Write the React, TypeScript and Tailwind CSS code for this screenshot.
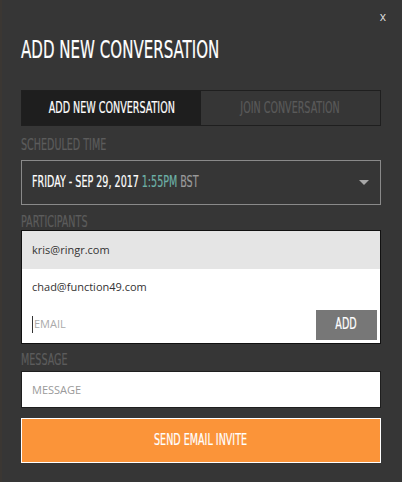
import { useState } from 'react'

const cond = "font-['DejaVu_Sans',sans-serif] [font-stretch:condensed] [-webkit-text-stroke:0.2px_currentColor]"
const body = "font-['Open_Sans',sans-serif]"

// squeeze DejaVu Condensed down to the tall narrow look of the original heading face
function Narrow({ children, className = '', center = false }: { children: React.ReactNode; className?: string; center?: boolean }) {
  return (
    <span className={`inline-block whitespace-nowrap scale-x-[0.71] ${center ? 'origin-center' : 'origin-left'} ${className}`}>
      {children}
    </span>
  )
}

function Label({ children }: { children: string }) {
  return (
    <div className={`${cond} text-[15px] leading-[14px] text-[#5c5c5c] uppercase`}>
      <Narrow>{children}</Narrow>
    </div>
  )
}

export default function App() {
  const [tab, setTab] = useState(0)
  const participants = ['kris@ringr.com', 'chad@function49.com']

  return (
    <div className="w-[402px] h-[482px] bg-[#363636] border-l-2 border-[#3b3733] relative">
      <button className={`absolute right-[16px] top-[8px] text-[12px] text-[#dddddd] ${body}`}>x</button>
      <div className="pl-[19px] pr-[21px] pt-[36px]">
        <h1 className={`${cond} text-[25px] leading-[28px] text-white`}>
          <span className="inline-block whitespace-nowrap scale-x-[0.67] origin-left">ADD NEW CONVERSATION</span>
        </h1>

        <div className="mt-[26px] flex h-[36px] border border-[#1f1f1f]">
          <button
            onClick={() => setTab(0)}
            className={`flex-1 ${cond} text-[15px] ${tab === 0 ? 'bg-[#1e1e1e] text-white' : 'bg-[#363636] text-[#5a5a5a]'}`}
          >
            <Narrow center>ADD NEW CONVERSATION</Narrow>
          </button>
          <button
            onClick={() => setTab(1)}
            className={`flex-1 ${cond} text-[15px] ${tab === 1 ? 'bg-[#1e1e1e] text-white' : 'bg-[#363636] text-[#5a5a5a]'}`}
          >
            <Narrow center>JOIN CONVERSATION</Narrow>
          </button>
        </div>

        <div className="mt-[12px]">
          <Label>SCHEDULED TIME</Label>
          <div className="mt-[8px] h-[45px] border border-[#8a8a8a] flex items-center pl-[10px] pr-[10px]">
            <Narrow className={`${cond} text-[15px]`}>
              <span className="text-white">FRIDAY - SEP 29, 2017</span>
              <span className="text-[#6db0a6] ml-[4px]">1:55PM</span>
              <span className="text-[#9a9a9a] ml-[4px]">BST</span>
            </Narrow>
            <svg className="ml-auto mr-[1px]" width="10" height="6" viewBox="0 0 10 6">
              <path d="M0 0h10L5 5z" fill="#a8a8a8" />
            </svg>
          </div>
        </div>

        <div className="mt-[10px]">
          <Label>PARTICIPANTS</Label>
          <div className="mt-[1px] border border-[#111] bg-white">
            {participants.map((p, i) => (
              <div
                key={p}
                className={`${i === 0 ? 'h-[38px] bg-[#e5e5e5]' : 'h-[37px] bg-white'} flex items-center px-[10px] ${body} text-[11px] text-[#333]`}
              >
                {p}
              </div>
            ))}
            <div className="h-[37px] flex items-center pl-[10px] pr-[3px]">
              <input
                placeholder="EMAIL"
                className={`flex-1 min-w-0 outline-none ${body} text-[11px] text-[#333] placeholder:text-[#aaaaaa] border-l border-[#333] pl-[1px]`}
              />
              <button className={`w-[61px] h-[30px] bg-[#777777] text-white ${cond} text-[15px]`}>
                <Narrow center>ADD</Narrow>
              </button>
            </div>
          </div>
        </div>

        <div className="mt-[9px]">
          <Label>MESSAGE</Label>
          <input
            placeholder="MESSAGE"
            className={`mt-[4px] block w-full h-[37px] border border-[#1e1e1e] bg-white px-[10px] outline-none ${body} text-[11px] placeholder:text-[#9a9a9a]`}
          />
        </div>

        <button className={`mt-[10px] w-full h-[45px] bg-[#fb9439] border border-white text-white ${cond} text-[15px]`}>
          <Narrow center>SEND EMAIL INVITE</Narrow>
        </button>
      </div>
    </div>
  )
}
